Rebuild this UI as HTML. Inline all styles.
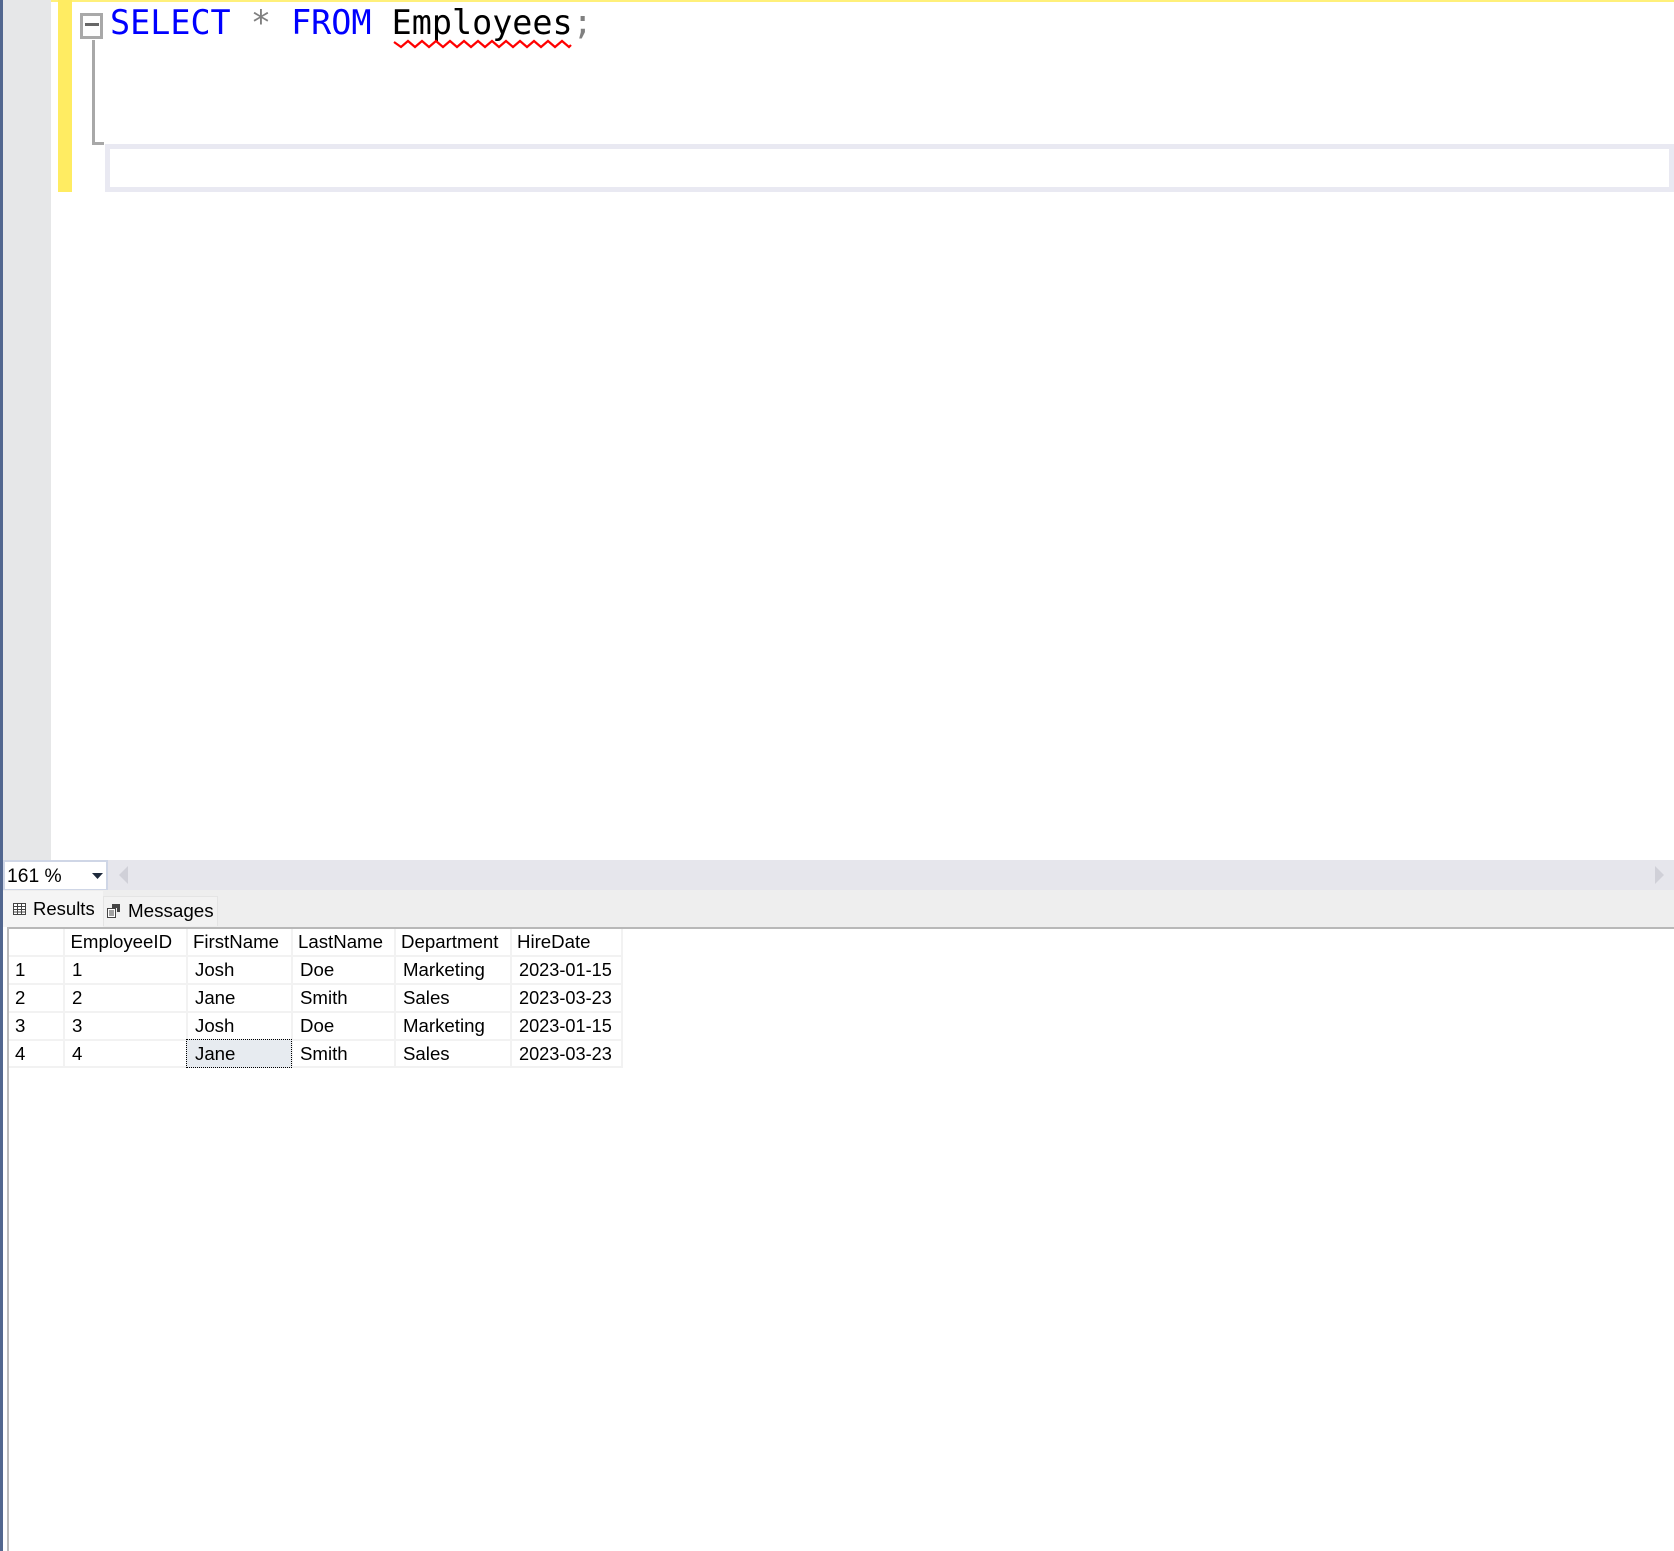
<!DOCTYPE html>
<html><head><meta charset="utf-8"><style>
html,body{margin:0;padding:0;background:#fff}
body{position:relative;width:1674px;height:1551px;overflow:hidden;font-family:"Liberation Sans",sans-serif;color:#000}
.a{position:absolute}
.t{position:absolute;font-size:18.65px;line-height:28px;height:28px;white-space:nowrap;color:#000}
.d{font-size:18.15px}
.h{top:928px}.r1{top:956px}.r2{top:984px}.r3{top:1012px}.r4{top:1040px}
.vl{position:absolute;width:2px;background:#f2f2f2;top:929px;height:139px}
.hl{position:absolute;height:2px;background:#f2f2f2;left:9px;width:613px}
#code{position:absolute;left:110px;top:1px;font-family:"DejaVu Sans Mono",monospace;font-size:33.42px;line-height:44px;white-space:pre}
</style></head><body>
<div class="a" style="left:0;top:0;width:1674px;height:2px;background:#fff07a"></div>
<div class="a" style="left:0;top:0;width:3px;height:1551px;background:#52678f"></div>
<div class="a" style="left:3px;top:0;width:48px;height:860px;background:#e6e7e8"></div>
<div class="a" style="left:58px;top:0;width:14px;height:192px;background:#ffec62"></div>

<div class="a" style="left:80px;top:13px;width:17px;height:20px;border:3px solid #a8a8a8;background:#fdfdfd"></div>
<div class="a" style="left:85px;top:23px;width:14px;height:3px;background:#666"></div>
<div class="a" style="left:92px;top:40px;width:3px;height:105px;background:#a8a8a8"></div>
<div class="a" style="left:92px;top:142px;width:12px;height:3px;background:#a8a8a8"></div>
<div class="a" style="left:105px;top:144px;width:1569px;height:48px;box-sizing:border-box;border:5px solid #e9e9f2;background:#fff"></div>

<div id="code"><span style="color:#0000ff">SELECT</span> <span style="color:#808080">*</span> <span style="color:#0000ff">FROM</span> Employees<span style="color:#808080">;</span></div>
<svg class="a" style="left:393px;top:38px" width="180" height="12" viewBox="0 0 180 12"><path d="M1 4L8 9L15 3L22 9L29 3L36 9L43 3L50 9L57 3L64 9L71 3L78 9L85 3L92 9L99 3L106 9L113 3L120 9L127 3L134 9L141 3L148 9L155 3L162 9L169 3L176 9L178 7" fill="none" stroke="#ff0000" stroke-width="2.2"/></svg>

<div class="a" style="left:3px;top:860px;width:1671px;height:30px;background:#e6e6ec"></div>
<div class="a" style="left:3px;top:860px;width:105px;height:31px;box-sizing:border-box;background:#fff;border:2px solid #cfd6e6"></div>
<div class="a" style="left:7px;top:862px;font-size:19.3px;line-height:30px;white-space:pre">161 %</div>
<svg class="a" style="left:91px;top:871px" width="14" height="10"><path d="M1 2H12L6.500 8Z" fill="#1e2a3c"/></svg>
<svg class="a" style="left:118px;top:864px" width="12" height="22"><path d="M10 2V20L1 11Z" fill="#d0d0d8"/></svg>
<svg class="a" style="left:1654px;top:864px" width="12" height="22"><path d="M1 2V20L10 11Z" fill="#d0d0d8"/></svg>

<div class="a" style="left:3px;top:890px;width:1671px;height:37px;background:#eeeeee"></div>
<div class="a" style="left:3px;top:891px;width:100px;height:36px;background:#f5f5f5"></div>
<div class="a" style="left:103px;top:896px;width:115px;height:30px;box-sizing:border-box;background:#f2f2f2;border:1px solid #e4e4e4;border-bottom:0"></div>
<svg class="a" style="left:13px;top:903px" width="14" height="13"><path d="M.5 .5H12.500V11.500H.5ZM.5 3.500H12.500M.5 6.500H12.500M.5 9H12.500M4.500 .5V11.500M8.500 .5V11.500" fill="#fff" stroke="#444" stroke-width="1"/></svg>
<svg class="a" style="left:107px;top:903px" width="15" height="15"><path d="M.5 5.500H8.500V14.500H.5ZM2 8H7M2 10H7M2 12H7" fill="#fff" stroke="#444" stroke-width="1"/><path d="M5 1H13V9H10V5H5Z" fill="#444"/></svg>
<div class="a" style="left:33px;top:895px;font-size:18.5px;line-height:28px">Results</div>
<div class="a" style="left:128px;top:897px;font-size:18.8px;line-height:28px">Messages</div>

<div class="a" style="left:7px;top:927px;width:1667px;height:2px;background:#b8b8b8"></div>
<div class="a" style="left:7px;top:927px;width:1.5px;height:624px;background:#bcbcbc"></div>

<div class="vl" style="left:63px"></div>
<div class="vl" style="left:186px"></div>
<div class="vl" style="left:291px"></div>
<div class="vl" style="left:394px"></div>
<div class="vl" style="left:510px"></div>
<div class="vl" style="left:621px"></div>
<div class="hl" style="top:955px"></div>
<div class="hl" style="top:983px"></div>
<div class="hl" style="top:1011px"></div>
<div class="hl" style="top:1039px"></div>
<div class="hl" style="top:1066px"></div>

<div class="a" style="left:186px;top:1039px;width:106px;height:29px;box-sizing:border-box;background:#e7ebf0;border:1px dotted #000"></div>

<div class="t h" style="left:70.500px">EmployeeID</div>
<div class="t h" style="left:193px">FirstName</div>
<div class="t h" style="left:298px">LastName</div>
<div class="t h" style="left:401px">Department</div>
<div class="t h" style="left:517px">HireDate</div>

<div class="t r1" style="left:15px">1</div><div class="t r1" style="left:72px">1</div><div class="t r1" style="left:195px">Josh</div><div class="t r1" style="left:300px">Doe</div><div class="t r1" style="left:403px">Marketing</div><div class="t r1 d" style="left:519px">2023-01-15</div>
<div class="t r2" style="left:15px">2</div><div class="t r2" style="left:72px">2</div><div class="t r2" style="left:195px">Jane</div><div class="t r2" style="left:300px">Smith</div><div class="t r2" style="left:403px">Sales</div><div class="t r2 d" style="left:519px">2023-03-23</div>
<div class="t r3" style="left:15px">3</div><div class="t r3" style="left:72px">3</div><div class="t r3" style="left:195px">Josh</div><div class="t r3" style="left:300px">Doe</div><div class="t r3" style="left:403px">Marketing</div><div class="t r3 d" style="left:519px">2023-01-15</div>
<div class="t r4" style="left:15px">4</div><div class="t r4" style="left:72px">4</div><div class="t r4" style="left:195px">Jane</div><div class="t r4" style="left:300px">Smith</div><div class="t r4" style="left:403px">Sales</div><div class="t r4 d" style="left:519px">2023-03-23</div>
</body></html>
